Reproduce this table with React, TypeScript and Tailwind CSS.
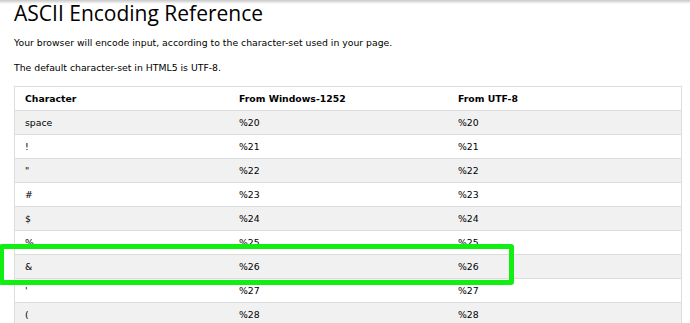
import React from "react";

const rows: [string, string, string][] = [
  ["space", "%20", "%20"],
  ["!", "%21", "%21"],
  ['"', "%22", "%22"],
  ["#", "%23", "%23"],
  ["$", "%24", "%24"],
  ["%", "%25", "%25"],
  ["&", "%26", "%26"],
  ["'", "%27", "%27"],
  ["(", "%28", "%28"],
];

export default function App() {
  return (
    <div className="relative w-[690px] h-[323px] overflow-hidden bg-white text-[#000]" style={{ fontFamily: '"DejaVu Sans", Verdana, sans-serif' }}>
      <div className="absolute left-0 top-0 w-full h-[4px] bg-gradient-to-b from-[#c8c8c8] to-white" />
      <div className="pl-[14px] pr-[8px]">
        <h1 className="h-[32px] text-[21px] leading-[26px] text-[#000]" style={{ fontFamily: '"Open Sans", "Noto Sans", sans-serif' }}>
          ASCII Encoding Reference
        </h1>
        <p className="mt-[3px] text-[9.3px] leading-[16px] text-[#000]">
          Your browser will encode input, according to the character-set used in your page.
        </p>
        <p className="mt-[9px] text-[9.3px] leading-[16px]">The default character-set in HTML5 is UTF-8.</p>
        <div className="mt-[10px] border border-[#dddddd] border-b-0 text-[9.3px]">
          <div className="grid grid-cols-[214px_219px_1fr] h-[24px] items-center border-b border-[#dddddd] font-bold">
            <div className="pl-[10px]">Character</div>
            <div className="pl-[10px]">From Windows-1252</div>
            <div className="pl-[10px]">From UTF-8</div>
          </div>
          {rows.map((r, i) => (
            <div
              key={i}
              className={`grid grid-cols-[214px_219px_1fr] h-[24px] items-center border-b border-[#dddddd] ${i % 2 === 0 ? "bg-[#f1f1f1]" : "bg-white"}`}
            >
              <div className="pl-[10px]">{r[0]}</div>
              <div className="pl-[10px]">{r[1]}</div>
              <div className="pl-[10px]">{r[2]}</div>
            </div>
          ))}
        </div>
      </div>
      <div className="absolute left-[-1px] top-[244px] w-[515px] h-[41px] border-[5px] border-[#11ee11] rounded-[3px]" />
    </div>
  );
}
